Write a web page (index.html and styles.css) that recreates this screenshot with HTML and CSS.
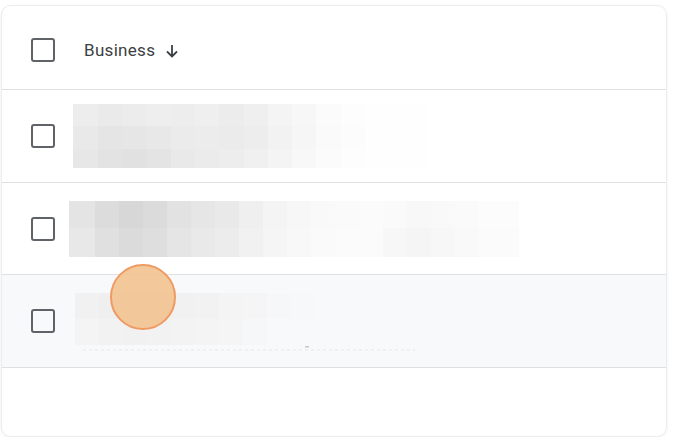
FILE: index.html
```html
<!DOCTYPE html>
<html>
<head>
<meta charset="utf-8">
<link rel="stylesheet" href="styles.css">
</head>
<body>
<div class="card">
  <div class="row header">
    <span class="checkbox"></span>
    <span class="title">Business</span>
    <svg class="arrow" width="18" height="18" viewBox="0 0 18 18"><path d="M9 3v11.5M4 9.5l5 5 5-5" fill="none" stroke="#3c4043" stroke-width="1.8"/></svg>
  </div>
  <div class="row">
    <span class="checkbox"></span>
    <svg class="pix pix1" width="360" height="64" viewBox="0 0 360 64">
      <g>
        <rect x="0" y="0" width="25" height="22" fill="#ededed"/><rect x="25" y="0" width="24" height="22" fill="#eaeaea"/><rect x="49" y="0" width="24" height="22" fill="#ececec"/><rect x="73" y="0" width="25" height="22" fill="#eeeeee"/><rect x="98" y="0" width="24" height="22" fill="#ededed"/><rect x="122" y="0" width="24" height="22" fill="#efefef"/><rect x="146" y="0" width="25" height="22" fill="#ececec"/><rect x="171" y="0" width="24" height="22" fill="#efefef"/><rect x="195" y="0" width="24" height="22" fill="#f4f4f4"/><rect x="219" y="0" width="24" height="22" fill="#f7f7f7"/><rect x="243" y="0" width="25" height="22" fill="#fbfbfb"/><rect x="268" y="0" width="24" height="22" fill="#fdfdfd"/><rect x="292" y="0" width="64" height="22" fill="#fefefe"/>
        <rect x="0" y="22" width="25" height="23" fill="#e9e9e9"/><rect x="25" y="22" width="24" height="23" fill="#e5e5e5"/><rect x="49" y="22" width="24" height="23" fill="#e6e6e6"/><rect x="73" y="22" width="25" height="23" fill="#e8e8e8"/><rect x="98" y="22" width="24" height="23" fill="#ebebeb"/><rect x="122" y="22" width="24" height="23" fill="#ececec"/><rect x="146" y="22" width="25" height="23" fill="#ebebeb"/><rect x="171" y="22" width="24" height="23" fill="#ededed"/><rect x="195" y="22" width="24" height="23" fill="#f2f2f2"/><rect x="219" y="22" width="24" height="23" fill="#f6f6f6"/><rect x="243" y="22" width="25" height="23" fill="#fafafa"/><rect x="268" y="22" width="24" height="23" fill="#fcfcfc"/><rect x="292" y="22" width="64" height="23" fill="#fefefe"/>
        <rect x="0" y="45" width="25" height="19" fill="#e7e7e7"/><rect x="25" y="45" width="24" height="19" fill="#e3e3e3"/><rect x="49" y="45" width="24" height="19" fill="#e1e1e1"/><rect x="73" y="45" width="25" height="19" fill="#e4e4e4"/><rect x="98" y="45" width="24" height="19" fill="#e9e9e9"/><rect x="122" y="45" width="24" height="19" fill="#ebebeb"/><rect x="146" y="45" width="25" height="19" fill="#ededed"/><rect x="171" y="45" width="24" height="19" fill="#f0f0f0"/><rect x="195" y="45" width="24" height="19" fill="#f4f4f4"/><rect x="219" y="45" width="24" height="19" fill="#f8f8f8"/><rect x="243" y="45" width="25" height="19" fill="#fbfbfb"/><rect x="268" y="45" width="24" height="19" fill="#fdfdfd"/><rect x="292" y="45" width="64" height="19" fill="#fefefe"/>
      </g>
    </svg>
  </div>
  <div class="row">
    <span class="checkbox"></span>
    <svg class="pix pix2" width="450" height="56" viewBox="0 0 450 56">
      <rect x="0" y="0" width="26" height="27" fill="#e4e4e4"/><rect x="26" y="0" width="24" height="27" fill="#dcdcdc"/><rect x="50" y="0" width="24" height="27" fill="#d7d7d7"/><rect x="74" y="0" width="24" height="27" fill="#dbdbdb"/><rect x="98" y="0" width="24" height="27" fill="#e2e2e2"/><rect x="122" y="0" width="24" height="27" fill="#e6e6e6"/><rect x="146" y="0" width="24" height="27" fill="#e9e9e9"/><rect x="170" y="0" width="24" height="27" fill="#efefef"/><rect x="194" y="0" width="24" height="27" fill="#f4f4f4"/><rect x="218" y="0" width="24" height="27" fill="#f7f7f7"/><rect x="242" y="0" width="24" height="27" fill="#f9f9f9"/><rect x="266" y="0" width="24" height="27" fill="#fafafa"/><rect x="290" y="0" width="24" height="27" fill="#fbfbfb"/><rect x="314" y="0" width="24" height="27" fill="#fafafa"/><rect x="338" y="0" width="24" height="27" fill="#f8f8f8"/><rect x="362" y="0" width="24" height="27" fill="#f9f9f9"/><rect x="386" y="0" width="24" height="27" fill="#fafafa"/><rect x="410" y="0" width="40" height="27" fill="#fcfcfc"/>
      <rect x="0" y="27" width="26" height="29" fill="#e8e8e8"/><rect x="26" y="27" width="24" height="29" fill="#e0e0e0"/><rect x="50" y="27" width="24" height="29" fill="#dbdbdb"/><rect x="74" y="27" width="24" height="29" fill="#dedede"/><rect x="98" y="27" width="24" height="29" fill="#e5e5e5"/><rect x="122" y="27" width="24" height="29" fill="#e9e9e9"/><rect x="146" y="27" width="24" height="29" fill="#ececec"/><rect x="170" y="27" width="24" height="29" fill="#f1f1f1"/><rect x="194" y="27" width="24" height="29" fill="#f5f5f5"/><rect x="218" y="27" width="24" height="29" fill="#f8f8f8"/><rect x="242" y="27" width="24" height="29" fill="#fafafa"/><rect x="266" y="27" width="24" height="29" fill="#fbfbfb"/><rect x="290" y="27" width="24" height="29" fill="#fbfbfb"/><rect x="314" y="27" width="24" height="29" fill="#f7f7f7"/><rect x="338" y="27" width="24" height="29" fill="#f5f5f5"/><rect x="362" y="27" width="24" height="29" fill="#f7f7f7"/><rect x="386" y="27" width="24" height="29" fill="#f9f9f9"/><rect x="410" y="27" width="40" height="29" fill="#fbfbfb"/>
    </svg>
  </div>
  <div class="row hover">
    <span class="checkbox"></span>
    <svg class="pix pix3" width="350" height="60" viewBox="0 0 350 60">
      <rect x="0" y="0" width="24" height="26" fill="#f1f1f2"/><rect x="24" y="0" width="24" height="26" fill="#efeff0"/><rect x="48" y="0" width="24" height="26" fill="#eeeeef"/><rect x="72" y="0" width="24" height="26" fill="#f0f0f1"/><rect x="96" y="0" width="24" height="26" fill="#f1f1f2"/><rect x="120" y="0" width="24" height="26" fill="#f2f2f3"/><rect x="144" y="0" width="24" height="26" fill="#f4f4f5"/><rect x="168" y="0" width="24" height="26" fill="#f5f5f6"/><rect x="192" y="0" width="24" height="26" fill="#f6f7f8"/><rect x="216" y="0" width="24" height="26" fill="#f7f8f9"/>
      <rect x="0" y="26" width="24" height="26" fill="#f4f4f5"/><rect x="24" y="26" width="24" height="26" fill="#f2f2f3"/><rect x="48" y="26" width="24" height="26" fill="#f1f1f2"/><rect x="72" y="26" width="24" height="26" fill="#f2f2f3"/><rect x="96" y="26" width="24" height="26" fill="#f3f3f4"/><rect x="120" y="26" width="24" height="26" fill="#f4f4f5"/><rect x="144" y="26" width="24" height="26" fill="#f5f5f6"/><rect x="168" y="26" width="24" height="26" fill="#f6f7f8"/>
      <line x1="8" y1="57" x2="340" y2="57" stroke="#f0f0f2" stroke-width="2" stroke-dasharray="3 3"/>
      <rect x="230" y="53" width="4" height="1.5" fill="#c8c8c8"/>
    </svg>
    <span class="cursor"></span>
  </div>
  <div class="row empty"></div>
</div>
</body>
</html>
```

FILE: styles.css
```css
html, body {
  margin: 0;
  padding: 0;
  background: #ffffff;
}
body {
  font-family: Roboto, "Liberation Sans", Arial, sans-serif;
  color: #3c4043;
}
.card {
  margin: 5px 0 0 1px;
  width: 666px;
  height: 432px;
  box-sizing: border-box;
  border: 1px solid #ececec;
  border-radius: 10px;
  box-shadow: 0 1px 3px rgba(60, 64, 67, 0.08);
  overflow: hidden;
  display: flex;
  flex-direction: column;
}
.row {
  position: relative;
  display: flex;
  align-items: center;
  height: 92px;
  flex: none;
  padding-left: 29px;
  border-bottom: 1px solid #e0e0e0;
  box-sizing: border-box;
}
.row.header {
  height: 84px;
  padding-top: 4px;
}
.row:nth-child(2) { height: 93px; }
.row:nth-child(4) { height: 93px; }
.row.hover {
  background: #f8f9fa;
}
.row.empty {
  flex: 1;
  border-bottom: none;
}
.checkbox {
  width: 24px;
  height: 24px;
  box-sizing: border-box;
  border: 2.4px solid #5f6368;
  border-radius: 3px;
  flex: none;
}
.title {
  margin-left: 29px;
  font-size: 17px;
  font-weight: 400;
  color: #3c4043;
  letter-spacing: 0.3px;
}
.arrow {
  margin-left: 8px;
  margin-top: 2px;
}
.pix {
  display: block;
  flex: none;
}
.pix1 { margin-left: 18px; }
.pix2 { margin-left: 14px; }
.pix3 { margin-left: 20px; margin-top: 4px; }
.cursor {
  position: absolute;
  left: 108px;
  top: -11px;
  width: 62px;
  height: 62px;
  border-radius: 50%;
  background: rgba(242, 196, 146, 0.92);
  border: 2.5px solid #ee9a62;
}
```
